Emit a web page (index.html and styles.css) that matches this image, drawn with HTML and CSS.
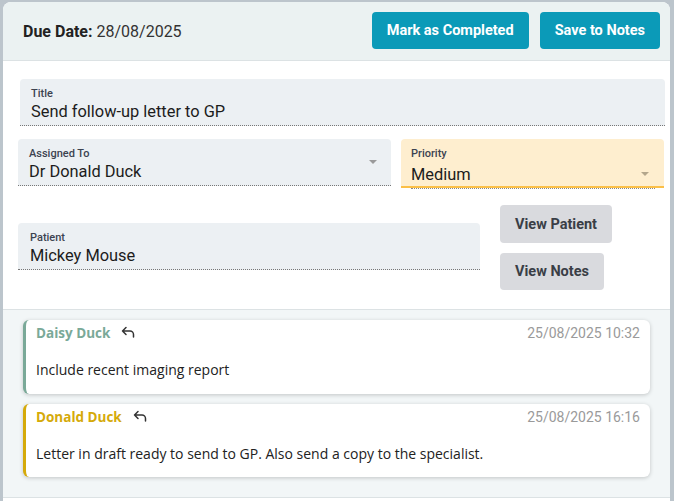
FILE: index.html
```html
<!DOCTYPE html>
<html>
<head>
<meta charset="utf-8">
<link rel="stylesheet" href="styles.css">
</head>
<body>
<div class="card">
  <div class="header">
    <div class="due"><b>Due Date:</b> 28/08/2025</div>
    <div class="actions">
      <button class="btn primary">Mark as Completed</button>
      <button class="btn primary">Save to Notes</button>
    </div>
  </div>
  <div class="form">
    <div class="field title-field">
      <div class="label">Title</div>
      <div class="value">Send follow-up letter to GP</div>
    </div>
    <div class="row2">
      <div class="field select">
        <div class="label">Assigned To</div>
        <div class="value">Dr Donald Duck</div>
        <span class="arrow"></span>
      </div>
      <div class="field select priority">
        <div class="label">Priority</div>
        <div class="value">Medium</div>
        <span class="arrow"></span>
      </div>
    </div>
    <div class="row3">
      <div class="field patient">
        <div class="label">Patient</div>
        <div class="value">Mickey Mouse</div>
      </div>
      <div class="side-btns">
        <button class="btn grey">View Patient</button>
        <button class="btn grey">View Notes</button>
      </div>
    </div>
  </div>
  <div class="notes">
    <div class="note daisy">
      <div class="note-head">
        <span class="name">Daisy Duck</span>
        <svg class="reply" viewBox="0 0 14 12" width="14" height="12"><path d="M5 1.5 1.5 5 5 8.5M1.5 5H9a3.5 3.5 0 0 1 3.5 3.5V11" fill="none" stroke="#333" stroke-width="1.5" stroke-linecap="round" stroke-linejoin="round"/></svg>
        <span class="date">25/08/2025 10:32</span>
      </div>
      <div class="note-body">Include recent imaging report</div>
    </div>
    <div class="note donald">
      <div class="note-head">
        <span class="name">Donald Duck</span>
        <svg class="reply" viewBox="0 0 14 12" width="14" height="12"><path d="M5 1.5 1.5 5 5 8.5M1.5 5H9a3.5 3.5 0 0 1 3.5 3.5V11" fill="none" stroke="#333" stroke-width="1.5" stroke-linecap="round" stroke-linejoin="round"/></svg>
        <span class="date">25/08/2025 16:16</span>
      </div>
      <div class="note-body">Letter in draft ready to send to GP. Also send a copy to the specialist.</div>
    </div>
  </div>
</div>
</body>
</html>
```
FILE: styles.css
```css
html, body {
  margin: 0;
  padding: 0;
  height: 100%;
  background: #bcc5cc;
  font-family: Roboto, "Liberation Sans", sans-serif;
  color: #222;
}
body {
  padding: 2px 4px 0 3px;
  box-sizing: border-box;
  overflow: hidden;
}
.card {
  background: #fff;
  border-radius: 8px 8px 0 0;
  overflow: hidden;
  min-height: 499px;
}
.header {
  height: 58px;
  background: #ebf2f2;
  border-bottom: 1px solid #dce2e4;
  display: flex;
  align-items: center;
  justify-content: space-between;
  padding: 0 10px 0 20px;
}
.due {
  font-size: 16px;
  color: #333;
}
.due b {
  font-weight: 700;
  color: #222;
}
.actions {
  display: flex;
  gap: 11px;
  margin-top: -1px;
}
.btn {
  font-family: Roboto, "Liberation Sans", sans-serif;
  font-size: 14.5px;
  font-weight: 700;
  border: none;
  border-radius: 4px;
  padding: 0 15px;
  height: 37px;
  cursor: pointer;
}
.btn.primary {
  background: #0b9ab8;
  color: #fff;
}
.btn.grey {
  background: #d9dade;
  color: #3a3e46;
}
.form {
  padding: 18px 5px 19px 15px;
  border-bottom: 1px solid #dce2e4;
}
.field {
  position: relative;
  background: #ecf0f3;
  border-radius: 4px 4px 0 0;
  border-bottom: 1px dotted #777;
  padding: 8px 11px 3px;
  box-sizing: border-box;
  height: 47px;
}
.label {
  font-size: 11px;
  line-height: 13px;
  font-weight: 500;
  color: #3c4350;
}
.value {
  font-size: 16.4px;
  line-height: 20px;
  margin-top: 2px;
  color: #1c1c1c;
}
.title-field {
  margin-left: 2px;
}
.row2 {
  display: grid;
  grid-template-columns: 373px 263px;
  gap: 10px;
  margin-top: 13px;
}
.select .arrow {
  position: absolute;
  right: 14px;
  top: 21px;
  width: 0;
  height: 0;
  border-left: 4px solid transparent;
  border-right: 4px solid transparent;
  border-top: 4px solid #9a9a9a;
}
.priority {
  background: #feeecf;
  border-bottom: 2px solid #fbbf47;
  height: 49px;
  padding-left: 10px;
}
.priority .value {
  margin-top: 5px;
}
.priority .arrow {
  top: 33px;
  right: 15px;
  border-top-color: #b3a68c;
}
.priority::after {
  content: "";
  position: absolute;
  left: 10px;
  right: 9px;
  bottom: -3px;
  border-bottom: 1px dotted #888;
}
.row3 {
  display: flex;
  gap: 20px;
  margin-top: 17px;
  align-items: flex-start;
}
.patient {
  width: 462px;
  margin-top: 18px;
  padding-left: 12px;
}
.side-btns {
  display: flex;
  flex-direction: column;
  align-items: flex-start;
  gap: 10px;
}
.side-btns .btn:first-child {
  height: 38px;
}
.notes {
  background: #f2f6f7;
  padding: 10px 20px 20px;
  border-bottom: 1px solid #dce2e4;
  display: flex;
  flex-direction: column;
  gap: 10px;
}
.note {
  background: #fff;
  border-radius: 6px;
  border-left: 3px solid #7aa998;
  box-shadow: 0 1px 4px rgba(0, 0, 0, 0.2);
  padding: 3px 10px 14px 10px;
  font-family: "Open Sans", "Liberation Sans", sans-serif;
}
.note.donald {
  border-left-color: #d5aa0a;
  padding-bottom: 13px;
}
.note-head {
  display: flex;
  align-items: center;
  height: 20px;
}
.name {
  font-size: 13.5px;
  font-weight: 700;
  line-height: 20px;
}
.daisy .name { color: #7aa998; }
.donald .name { color: #d5aa0a; }
.reply {
  margin-left: 11px;
  margin-top: -3px;
}
.date {
  margin-left: auto;
  font-family: Roboto, "Liberation Sans", sans-serif;
  font-size: 14px;
  color: #9a9a9a;
  line-height: 20px;
}
.note-body {
  margin-top: 17px;
  font-size: 14px;
  line-height: 20px;
  color: #222;
}
```
